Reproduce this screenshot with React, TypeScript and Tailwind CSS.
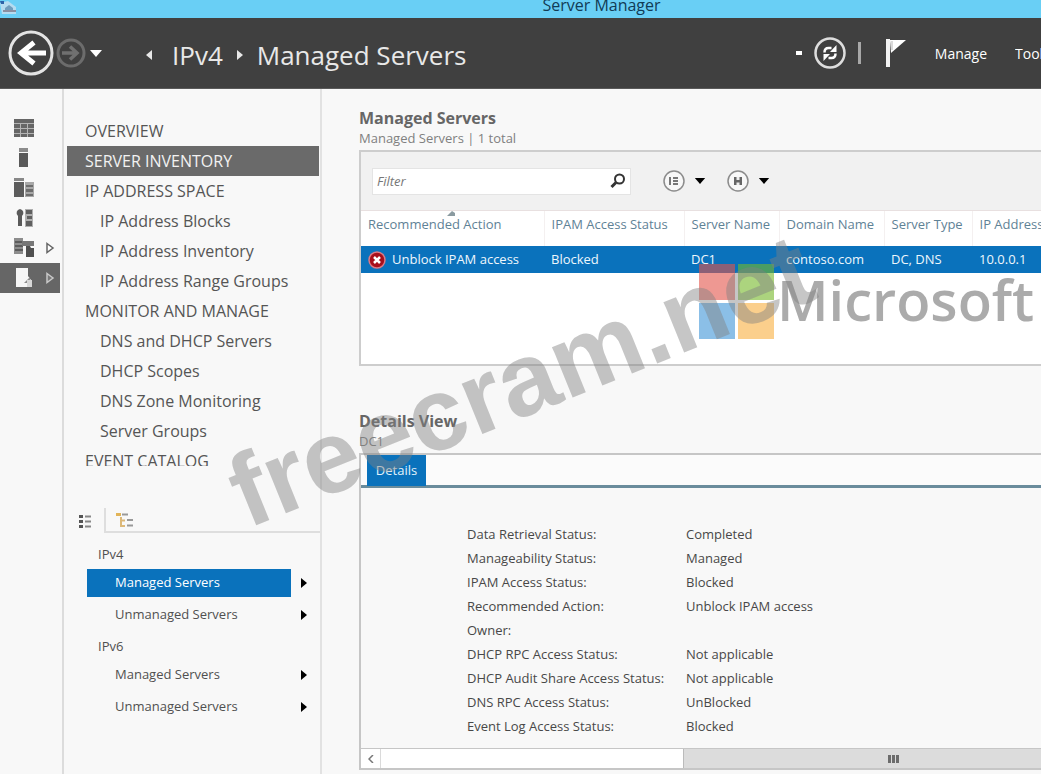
import React from "react";

const navItems = [
  { label: "OVERVIEW", level: 0 },
  { label: "SERVER INVENTORY", level: 0, active: true },
  { label: "IP ADDRESS SPACE", level: 0 },
  { label: "IP Address Blocks", level: 1 },
  { label: "IP Address Inventory", level: 1 },
  { label: "IP Address Range Groups", level: 1 },
  { label: "MONITOR AND MANAGE", level: 0 },
  { label: "DNS and DHCP Servers", level: 1 },
  { label: "DHCP Scopes", level: 1 },
  { label: "DNS Zone Monitoring", level: 1 },
  { label: "Server Groups", level: 1 },
];

const columns = [
  { label: "Recommended Action", width: "w-[183px]", sorted: true },
  { label: "IPAM Access Status", width: "w-[140px]" },
  { label: "Server Name", width: "w-[95px]" },
  { label: "Domain Name", width: "w-[105px]" },
  { label: "Server Type", width: "w-[88px]" },
  { label: "IP Address", width: "w-auto" },
];

const details = [
  ["Data Retrieval Status:", "Completed"],
  ["Manageability Status:", "Managed"],
  ["IPAM Access Status:", "Blocked"],
  ["Recommended Action:", "Unblock IPAM access"],
  ["Owner:", ""],
  ["DHCP RPC Access Status:", "Not applicable"],
  ["DHCP Audit Share Access Status:", "Not applicable"],
  ["DNS RPC Access Status:", "UnBlocked"],
  ["Event Log Access Status:", "Blocked"],
];

function Caret({ className }: { className?: string }) {
  return (
    <svg viewBox="0 0 12 7" className={className} aria-hidden="true">
      <path d="M0 0h12L6 7z" fill="currentColor" />
    </svg>
  );
}

function Arrow({ className }: { className?: string }) {
  return (
    <svg viewBox="0 0 6 10" className={className} aria-hidden="true">
      <path d="M0 0l6 5-6 5z" fill="currentColor" />
    </svg>
  );
}

function TitleBar() {
  return (
    <div className="relative flex h-[18px] shrink-0 items-start justify-center overflow-hidden bg-[#69cff5] pl-[162px]">
      <svg viewBox="0 0 18 16" className="absolute left-0 top-0 h-4 w-[18px]" aria-hidden="true">
        <path d="M0 3l8-2 8 6v7H2z" fill="#b5dcf0" />
        <path d="M0 1h4v3H1z" fill="#2c62a8" />
        <path d="M5 8l4-3 4 3v2H5z" fill="#6f9dbd" />
        <path d="M3 10h13v2H3z" fill="#8a8fa0" />
      </svg>
      <h1 className="-mt-1 whitespace-nowrap text-[16px] font-medium leading-[18px] text-[#123c55]">Server Manager</h1>
    </div>
  );
}

function Header() {
  return (
    <header className="flex h-[71px] shrink-0 items-center overflow-hidden border-b border-[#5a5a5a] bg-[#404040] text-[#e8e8e8]">
      <button aria-label="Back" className="ml-2 shrink-0">
        <svg viewBox="0 0 46 46" className="block size-[46px]">
          <circle cx="23" cy="23" r="21" fill="none" stroke="#e4e4e4" strokeWidth="3" />
          <path d="M38 23H13M26 12.500L13 23l13 10.500" fill="none" stroke="#fff" strokeWidth="5" />
        </svg>
      </button>
      <button aria-label="Forward" className="ml-0.5 shrink-0">
        <svg viewBox="0 0 30 30" className="block size-[30px]">
          <circle cx="15" cy="15" r="13" fill="none" stroke="#6c6c6c" strokeWidth="3" />
          <path d="M6 15h14M14 8.500l7 6.500-7 6.500" fill="none" stroke="#707070" strokeWidth="3.500" />
        </svg>
      </button>
      <button aria-label="History" className="ml-1 shrink-0">
        <Caret className="h-[7px] w-3 text-white" />
      </button>
      <nav aria-label="Breadcrumb" className="ml-11 flex items-center whitespace-nowrap pt-1 text-[26px]">
        <Arrow className="h-2.5 w-1.5 rotate-180" />
        <a href="#ipv4" className="ml-5">IPv4</a>
        <Arrow className="ml-3.5 h-2.5 w-1.5" />
        <a href="#managed" className="ml-3.5">Managed Servers</a>
      </nav>
      <div className="ml-auto flex shrink-0 items-center text-[14px]">
        <span className="h-1 w-1.5 bg-white" />
        <button aria-label="Refresh" className="ml-3">
          <svg viewBox="0 0 32 32" className="block size-8">
            <circle cx="16" cy="16" r="14.500" fill="none" stroke="#dedede" strokeWidth="2.500" />
            <path d="M10.500 15.500c0-3 1.500-4.500 4-4.500h3M21.500 16.500c0 3-1.500 4.500-4 4.500h-3" fill="none" stroke="#fff" strokeWidth="2.500" />
            <path d="M22.500 8v7H16zM9.500 24v-7H16z" fill="#fff" />
          </svg>
        </button>
        <span className="ml-3 h-[22px] w-[3px] bg-[#a8a8a8]" />
        <button aria-label="Notifications" className="ml-6">
          <svg viewBox="0 0 22 30" className="block h-[30px] w-[22px]">
            <path d="M1 1h4v28H1z" fill="#f2f2f2" />
            <path d="M5 2h16L6 15z" fill="#fff" />
            <path d="M7 3v9" stroke="#b5b5b5" />
          </svg>
        </button>
        <button className="ml-7 font-medium text-white">Manage</button>
        <button className="ml-7 w-[26px] overflow-hidden text-left font-medium text-white">Tools</button>
      </div>
    </header>
  );
}

function Rail() {
  const item = "flex h-[30px] w-full items-center pl-[13px]";
  return (
    <nav aria-label="Server roles" className="w-16 shrink-0 border-r-2 border-[#dcdcdc] pt-6 text-[#606060]">
      <button aria-label="Dashboard" className={item}>
        <svg viewBox="0 0 22 20" className="h-5 w-[22px]">
          <path d="M1 1h20v18H1z" fill="#b4b4b4" />
          <path d="M1 1h20v4H1zM1 6h6v4H1zM8 6h6v4H8zM15 6h6v4h-6zM1 11h6v4H1zM8 11h6v4H8zM15 11h6v4h-6zM1 16h6v3H1zM8 16h6v3H8zM15 16h6v3h-6z" fill="#666" />
        </svg>
      </button>
      <button aria-label="Local Server" className={item}>
        <svg viewBox="0 0 22 20" className="h-5 w-[22px]">
          <path d="M6 0h9v4H6z" fill="#8c8c8c" />
          <path d="M6 5h9v14H6z" fill="#5a5a5a" />
        </svg>
      </button>
      <button aria-label="All Servers" className={item}>
        <svg viewBox="0 0 22 20" className="h-5 w-[22px]">
          <path d="M1 0h10v3H1z" fill="#888" />
          <path d="M1 4h10v15H1z" fill="#5c5c5c" />
          <path d="M12 4h9v15h-9z" fill="#a8a8a8" />
          <path d="M13 7h7v2h-7zM13 11h7v3h-7zM13 16h7v2h-7z" fill="#6d6d6d" />
        </svg>
      </button>
      <button aria-label="DHCP" className={item}>
        <svg viewBox="0 0 22 20" className="h-5 w-[22px]">
          <path d="M7 1a4 4 0 0 1 2 7v10H5V8a4 4 0 0 1 2-7z" fill="#5a5a5a" />
          <path d="M12 1h8v18h-8z" fill="#b0b0b0" />
          <path d="M13 2h6v4h-6zM14 8h5v3h-5zM13 13h6v5h-6z" fill="#606060" />
        </svg>
      </button>
      <button aria-label="File Services" className={item}>
        <svg viewBox="0 0 22 20" className="h-5 w-[22px]">
          <path d="M1 0h9v16H1z" fill="#8d8d8d" />
          <path d="M2 4h8M2 8h8M2 12h8" stroke="#5c5c5c" strokeWidth="2" />
          <path d="M9 3h12v5H9z" fill="#777" />
          <path d="M13 8h4l1 2h3v9h-8z" fill="#505050" />
        </svg>
        <svg viewBox="0 0 10 12" className="ml-2.5 h-3 w-2.5">
          <path d="M2 1.500L8 6l-6 4.500z" fill="#fff" stroke="#666" strokeWidth="1.500" />
        </svg>
      </button>
      <button aria-label="IPAM" className="flex h-[30px] w-[60px] items-center bg-[#666666] pl-[13px]">
        <svg viewBox="0 0 22 20" className="h-5 w-[22px]">
          <path d="M3 0h12v8l3 4v7H3z" fill="#f6f6f6" />
          <path d="M14 12l3-3v6h-6z" fill="#8d8d8d" />
          <path d="M14 12h5v7h-5z" fill="#d8d8d8" />
        </svg>
        <svg viewBox="0 0 10 12" className="ml-2.5 h-3 w-2.5">
          <path d="M2 1.500L8 6l-6 4.500z" fill="#777" stroke="#c8c8c8" strokeWidth="1.500" />
        </svg>
      </button>
    </nav>
  );
}

function TreeGroup({ name, active }: { name: string; active?: boolean }) {
  return (
    <section className="text-[13px] text-[#505050]">
      <h3 className="flex h-7 items-center pl-8">{name}</h3>
      <div className="flex h-7 items-center pl-[21px] pr-3">
        <a
          href="#managed"
          className={
            active
              ? "flex h-full w-[204px] items-center bg-[#0a72bc] pl-7 text-white"
              : "flex h-full w-[204px] items-center pl-7"
          }
        >
          Managed Servers
        </a>
        <Arrow className="ml-2.5 h-2.5 w-1.5 text-black" />
      </div>
      <div className="flex h-9 items-center pl-[21px] pr-3">
        <a href="#unmanaged" className="flex h-full w-[204px] items-center pl-7">
          Unmanaged Servers
        </a>
        <Arrow className="ml-2.5 h-2.5 w-1.5 text-black" />
      </div>
    </section>
  );
}

function Sidebar() {
  return (
    <aside className="w-[258px] shrink-0 border-r-2 border-[#e2e2e2] pl-0.5">
      <nav aria-label="IPAM" className="pt-[27px] text-[16px] text-[#555]">
        {navItems.map((n) => (
          <a
            key={n.label}
            href="#nav"
            className={
              n.active
                ? "mx-px flex h-[30px] items-center bg-[#6a6a6a] pl-[18px] text-[#f2f2f2]"
                : n.level
                  ? "flex h-[30px] items-center pl-[34px]"
                  : "flex h-[30px] items-center pl-[19px]"
            }
          >
            {n.label}
          </a>
        ))}
        <a href="#events" className="block h-5 overflow-hidden pl-[19px] leading-[30px]">EVENT CATALOG</a>
      </nav>
      <div className="mt-[42px] flex h-[25px]">
        <button aria-label="List view" className="flex w-10 items-center justify-center border-r-2 border-[#dedede]">
          <svg viewBox="0 0 14 14" className="size-3.5">
            <path d="M1 1h4v3H1zM1 6h4v3H1zM1 11h4v3H1z" fill="#555" />
            <path d="M7 2.500h6M7 7.500h6M7 12.500h6" stroke="#888" strokeWidth="2" />
          </svg>
        </button>
        <div className="flex flex-1 items-center border-b-2 border-[#dedede] pl-2.5">
          <button aria-label="Tree view">
            <svg viewBox="0 0 18 14" className="block h-3.5 w-[18px]">
              <path d="M0 1.500h5" stroke="#e2b458" strokeWidth="3" />
              <path d="M6 1.500h6M11 7h6M11 12.500h6" stroke="#999" strokeWidth="2" />
              <path d="M5 4v9h4M5 7.500h4" fill="none" stroke="#dcb878" strokeWidth="2" />
            </svg>
          </button>
        </div>
      </div>
      <div className="pt-2">
        <TreeGroup name="IPv4" active />
        <TreeGroup name="IPv6" />
      </div>
    </aside>
  );
}

function Toolbar() {
  return (
    <div className="flex h-[58px] items-center bg-[#f1f1f1] pl-[11px]">
      <div className="flex h-[27px] w-[259px] items-center border border-[#e4e4e4] bg-white">
        <input
          aria-label="Filter"
          placeholder="Filter"
          className="h-full min-w-0 flex-1 bg-transparent pl-1 text-[13px] italic outline-none placeholder:text-[#777]"
        />
        <button aria-label="Search" className="pr-1">
          <svg viewBox="0 0 16 16" className="block size-4">
            <circle cx="9.500" cy="6" r="4.500" fill="none" stroke="#333" strokeWidth="2" />
            <path d="M6 9.500L1.500 14" stroke="#333" strokeWidth="3" />
          </svg>
        </button>
      </div>
      <button aria-label="Filter options" className="ml-[31px] flex items-center gap-2">
        <svg viewBox="0 0 24 24" className="size-6">
          <circle cx="12" cy="12" r="10" fill="#f8f8f8" stroke="#8c8c8c" strokeWidth="1.500" />
          <path d="M8 8v8" stroke="#777" strokeWidth="2" />
          <path d="M11 8h5v2h-5zM11 11h5v2h-5zM11 14h5v2h-5z" fill="#777" />
        </svg>
        <Caret className="h-1.5 w-3 text-black" />
      </button>
      <button aria-label="Saved queries" className="ml-5 flex items-center gap-2">
        <svg viewBox="0 0 24 24" className="size-6">
          <circle cx="12" cy="12" r="10" fill="#f8f8f8" stroke="#8c8c8c" strokeWidth="1.500" />
          <path d="M8 8h8v8H8z" fill="#666" />
          <path d="M10.500 8h3v3h-3zM10.500 13.500h3V16h-3z" fill="#eee" />
        </svg>
        <Caret className="h-1.5 w-3 text-black" />
      </button>
    </div>
  );
}

function ServersPanel() {
  return (
    <section className="border-y-2 border-l-2 border-[#cdcdcd] bg-white">
      <Toolbar />
      <div className="min-h-[154px] overflow-hidden border-t border-[#e8e0e0]">
        <table className="w-full table-fixed whitespace-nowrap text-left text-[13px]">
          <thead>
            <tr className="h-[35px] text-[#5f8296]">
              {columns.map((c, i) => (
                <th
                  key={c.label}
                  scope="col"
                  className={`${c.width} relative pb-2 pl-[7px] font-normal ${i ? "border-l border-[#f4f0f0]" : ""}`}
                >
                  {c.label}
                  {c.sorted && (
                    <svg viewBox="0 0 8 5" className="absolute left-[86px] top-0 h-[5px] w-2">
                      <path d="M0 5l5-5 3 2v3z" fill="#8a9aa0" />
                    </svg>
                  )}
                </th>
              ))}
            </tr>
          </thead>
          <tbody>
            <tr className="h-[27px] bg-[#0a72bc] font-medium text-[#eef7fc]">
              <td className="pl-[7px]">
                <span className="flex items-center gap-1.5">
                  <svg viewBox="0 0 18 18" className="size-[18px] shrink-0">
                    <circle cx="9" cy="9" r="8" fill="#a80f1c" stroke="#dc7a86" strokeWidth="1.500" />
                    <path d="M6 6l6 6M12 6l-6 6" stroke="#fff" strokeWidth="2.500" />
                  </svg>
                  Unblock IPAM access
                </span>
              </td>
              <td className="pl-[7px]">Blocked</td>
              <td className="pl-[7px]">DC1</td>
              <td className="pl-[7px]">contoso.com</td>
              <td className="pl-[7px]">DC, DNS</td>
              <td className="pl-[7px]">10.0.0.1</td>
            </tr>
          </tbody>
        </table>
      </div>
    </section>
  );
}

function DetailsPanel() {
  return (
    <section className="border-y-2 border-l-2 border-[#c6c6c6]">
      <div className="flex h-[33px] border-b-[3px] border-[#6a8c9c] bg-[#fbfbfb] pl-1.5">
        <button className="h-[31px] w-[59px] bg-[#0a72bc] text-[13px] text-[#e4f2fa]">Details</button>
      </div>
      <dl className="grid grid-cols-[219px_1fr] pb-2.5 pl-[106px] pt-[34px] text-[13px] leading-[24px] text-[#484848]">
        {details.map(([k, v]) => (
          <React.Fragment key={k}>
            <dt>{k}</dt>
            <dd>{v}</dd>
          </React.Fragment>
        ))}
      </dl>
      <div className="flex h-5 border-t border-[#c6c6c6] bg-white">
        <button aria-label="Scroll left" className="flex w-5 shrink-0 items-center justify-center border-r border-[#dadada]">
          <svg viewBox="0 0 6 8" className="h-2 w-1.5">
            <path d="M5 0L1 4l4 4" fill="none" stroke="#777" strokeWidth="1.500" />
          </svg>
        </button>
        <div className="ml-[302px] flex flex-1 items-center justify-center border-l border-[#bbb] bg-[#dcdcdc] pl-[62px]">
          <div className="flex h-2 gap-px">
            <i className="w-[3px] bg-[#6c6c6c]" />
            <i className="w-[3px] bg-[#6c6c6c]" />
            <i className="w-[3px] bg-[#6c6c6c]" />
          </div>
        </div>
      </div>
    </section>
  );
}

function Watermarks() {
  return (
    <div aria-hidden="true" className="pointer-events-none absolute inset-0 overflow-hidden">
      <div className="absolute left-[699px] top-[264px] flex items-center gap-[3px]">
        <div className="grid size-[75px] shrink-0 grid-cols-2 gap-[3px] opacity-60">
          <i className="bg-[#e3554a]" />
          <i className="bg-[#76b82a]" />
          <i className="bg-[#3f96d8]" />
          <i className="bg-[#fab040]" />
        </div>
        <span className="-mt-1 text-[56px] font-semibold leading-[75px] text-[#737373]/60">Microsoft</span>
      </div>
      <span className="absolute left-[247px] top-[442px] origin-[0_86px] -rotate-[22deg] font-['Liberation_Sans',sans-serif] text-[103px] font-bold leading-none text-[#808080]/45">
        freecram.net
      </span>
    </div>
  );
}

export default function App() {
  return (
    <div className="relative flex min-h-screen flex-col overflow-hidden bg-[#f8f8f8] font-['Open_Sans','Noto_Sans',sans-serif]">
      <TitleBar />
      <Header />
      <div className="flex flex-1">
        <Rail />
        <Sidebar />
        <main className="min-w-0 flex-1 pl-[37px] pt-[19px]">
          <h2 className="text-[16px] font-bold leading-5 text-[#666]">Managed Servers</h2>
          <p className="pb-0.5 text-[13px] leading-5 text-[#808080]">Managed Servers | 1 total</p>
          <ServersPanel />
          <h2 className="mt-[45px] text-[16px] font-bold leading-5 text-[#666]">Details View</h2>
          <p className="pb-0.5 text-[13px] leading-5 text-[#808080]">DC1</p>
          <DetailsPanel />
        </main>
      </div>
      <Watermarks />
    </div>
  );
}
